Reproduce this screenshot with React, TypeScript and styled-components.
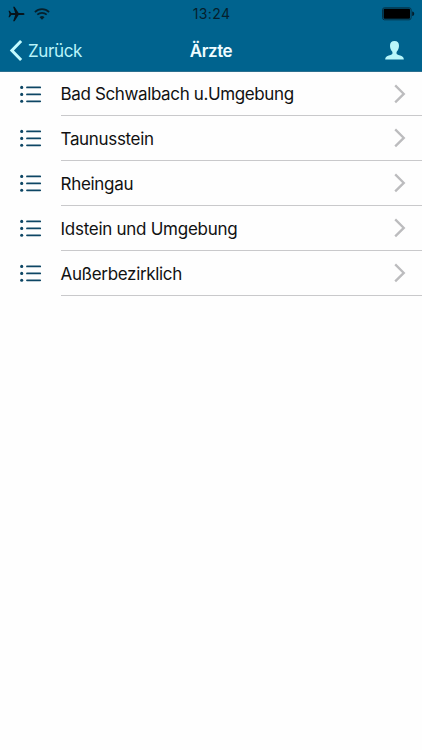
import React from "react";
import styled, { createGlobalStyle } from "styled-components";

const GlobalStyle = createGlobalStyle`
  * { box-sizing: border-box; }
  html, body { margin: 0; background: #fefefe; }
  body { font-family: Inter, "Liberation Sans", sans-serif; overflow: hidden; }
  svg { display: block; flex: none; }
`;

const Screen = styled.div`
  width: 100%;
  height: 750px;
  background: #fefefe;
  display: flex;
  flex-direction: column;
`;

const Header = styled.header`
  height: 72px;
  flex: none;
  background: #00638e;
  border-bottom: 1px solid #2b6f8f;
`;

const StatusBar = styled.div`
  height: 28px;
  display: grid;
  grid-template-columns: 1fr auto 1fr;
  align-items: center;
  padding: 0 7px 0 8px;
`;

const StatusIcons = styled.div`
  display: flex;
  align-items: center;
  gap: 9px;
`;

const BatterySlot = styled.div`
  display: flex;
  justify-content: flex-end;
`;

const Clock = styled.time`
  font-size: 14px;
  line-height: 28px;
  letter-spacing: 0.4px;
  color: #06202c;
`;

const NavBar = styled.nav`
  height: 43px;
  display: grid;
  grid-template-columns: 1fr auto 1fr;
  align-items: center;
  padding: 1px 18px 0 9px;
`;

const BackButton = styled.button`
  display: flex;
  align-items: center;
  gap: 5px;
  padding: 0;
  border: 0;
  background: none;
  color: #b9f4fa;
  font: 400 17px/44px Inter, sans-serif;
  letter-spacing: -0.38px;
`;

const Title = styled.h1`
  margin: 0 0 0 9px;
  font-size: 17px;
  line-height: 42px;
  font-weight: 600;
  letter-spacing: -0.45px;
  color: #effcff;
`;

const ProfileButton = styled.button`
  justify-self: end;
  padding: 0;
  border: 0;
  background: none;
`;

const List = styled.ul`
  list-style: none;
  margin: 0;
  padding: 0;
`;

const Row = styled.li`
  height: 45px;
  display: flex;
  align-items: stretch;
  padding-left: 20px;

  &:first-child {
    height: 44px;
  }
`;

const IconCell = styled.div`
  width: 40.5px;
  padding-top: 13px;
`;

const RowBody = styled.div`
  flex: 1;
  display: flex;
  align-items: center;
  justify-content: space-between;
  padding-right: 16px;
  border-bottom: 1px solid #c9c9cb;
`;

const Label = styled.span<{ $tracking: number }>`
  padding-top: 2px;
  font-size: 17px;
  line-height: 41px;
  letter-spacing: ${(p) => p.$tracking}px;
  color: #111;
  white-space: nowrap;
`;

const Airplane = () => (
  <svg width="17" height="16" viewBox="0 0 17 16" fill="#06141c">
    <path d="M16.6 8c0-.7-1-1.1-2-1.1h-4L6.6.8H5.1l2.1 6.1H3.3L1.7 4.8H.5L1.5 8 .5 11.2h1.2l1.6-2.1h3.9l-2.1 6.1h1.5l4-6.1h4c1 0 2-.4 2-1.1z" />
  </svg>
);

const Wifi = () => (
  <svg width="16" height="12" viewBox="0 0 16 12" fill="none" stroke="#06202c" strokeWidth="1.7">
    <path d="M.9 4.1a10.2 10.2 0 0 1 14.2 0M3.3 6.7a6.8 6.8 0 0 1 9.4 0" />
    <path d="M8 11.7 5.5 9.2a3.6 3.6 0 0 1 5 0z" fill="#06202c" stroke="none" />
  </svg>
);

const Battery = () => (
  <svg width="33" height="14" viewBox="0 0 33 14">
    <rect x=".5" y=".8" width="28.6" height="12" rx="2" fill="none" stroke="#053247" />
    <rect x="1.6" y="1.8" width="26.4" height="10" rx="1" fill="#000" />
    <path d="M30.2 4.6c1.5.2 2 1.1 2 2.2s-.5 2-2 2.2z" fill="#031d2a" />
  </svg>
);

const BackArrow = () => (
  <svg width="14" height="24" viewBox="0 0 14 24" fill="none" stroke="#c3fbff" strokeWidth="3">
    <path d="m12.1 2-9.2 9.5 9.2 9.5" />
  </svg>
);

const Person = () => (
  <svg width="19" height="20" viewBox="0 0 19 20" fill="#b9f6fa">
    <path d="M9.5 0c3 0 4.6 1.8 4.5 4.7 0 2.2-.7 4.2-2 5.5-.6.7-.7 2.6 0 3.1 1.4 1 5.2 1.5 6.3 3.1.4.7.5 1.4.5 2.2H.2c0-.8.1-1.5.5-2.2 1.1-1.6 4.9-2.1 6.3-3.1.7-.5.6-2.4 0-3.1-1.3-1.3-2-3.3-2-5.5C4.9 1.8 6.5 0 9.5 0z" />
  </svg>
);

const ListIcon = () => (
  <svg width="22" height="18" viewBox="0 0 22 18" fill="#0d4664">
    <circle cx="1.7" cy="2.4" r="1.55" />
    <circle cx="1.7" cy="9.4" r="1.55" />
    <circle cx="1.7" cy="16.3" r="1.55" />
    <path d="M7 2.4h13.2M7 9.4h13.2M7 16.3h13.2" stroke="#0d4664" strokeWidth="1.8" strokeLinecap="round" />
  </svg>
);

const Disclosure = () => (
  <svg width="12" height="20" viewBox="0 0 12 20" fill="none" stroke="#bcbcbe" strokeWidth="2.3">
    <path d="m1.2 1.4 8.6 8.5-8.6 8.5" />
  </svg>
);

const regions = [
  { name: "Bad Schwalbach u.Umgebung", tracking: -0.37 },
  { name: "Taunusstein", tracking: -0.33 },
  { name: "Rheingau", tracking: -0.3 },
  { name: "Idstein und Umgebung", tracking: -0.27 },
  { name: "Außerbezirklich", tracking: -0.33 },
];

export default function App() {
  return (
    <Screen>
      <GlobalStyle />
      <Header>
        <StatusBar>
          <StatusIcons>
            <Airplane />
            <Wifi />
          </StatusIcons>
          <Clock>13:24</Clock>
          <BatterySlot>
            <Battery />
          </BatterySlot>
        </StatusBar>
        <NavBar>
          <BackButton>
            <BackArrow />
            Zurück
          </BackButton>
          <Title>Ärzte</Title>
          <ProfileButton aria-label="Profil">
            <Person />
          </ProfileButton>
        </NavBar>
      </Header>
      <List>
        {regions.map((region) => (
          <Row key={region.name}>
            <IconCell>
              <ListIcon />
            </IconCell>
            <RowBody>
              <Label $tracking={region.tracking}>{region.name}</Label>
              <Disclosure />
            </RowBody>
          </Row>
        ))}
      </List>
    </Screen>
  );
}
